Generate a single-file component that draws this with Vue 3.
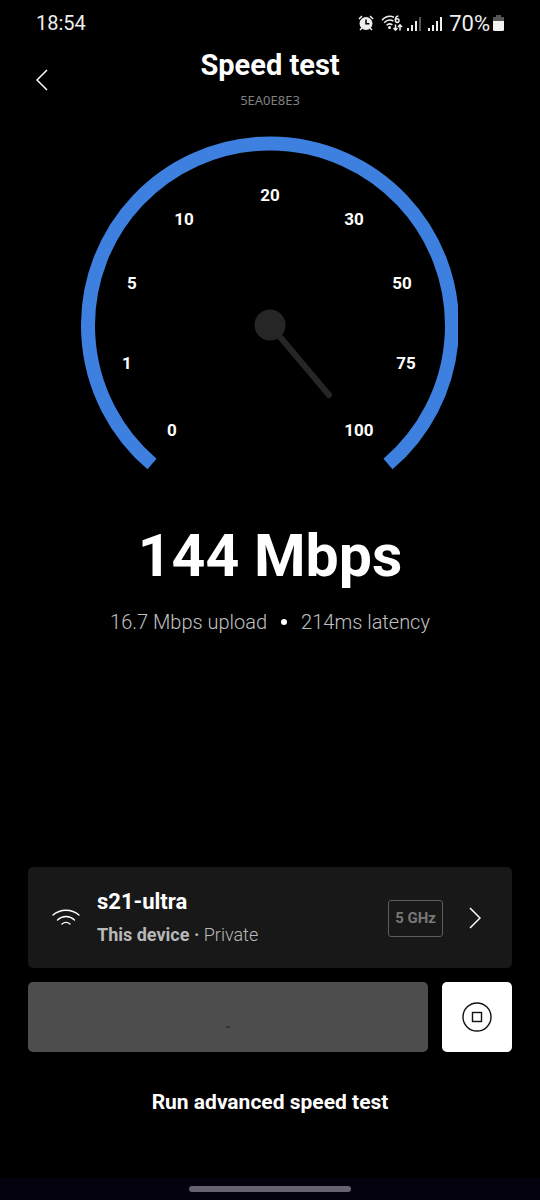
<template>
  <div class="screen">
    <div class="status-bar">
      <span>{{ time }}</span>
      <div class="status-icons">
        <svg width="16" height="16" viewBox="0 0 16 16" aria-hidden="true">
          <path d="M1 4 4 1M15 4 12 1M4 13l-2 2M12 13l2 2" stroke="#eee" stroke-width="1.6" />
          <circle cx="8" cy="8.5" r="6.5" fill="#eee" />
          <path d="M8 4.5v4.3h3.4" fill="none" stroke="#000" stroke-width="1.5" />
        </svg>
        <svg class="wifi-status" width="22" height="17" viewBox="0 0 22 17" aria-hidden="true">
          <g fill="none" stroke="#eee" stroke-width="1.5">
            <path d="M1 5.2C4.5 1.4 9 .6 13 2.2" />
            <path d="M3.2 7.8C5.8 5 9.5 4.6 12.4 6" />
            <path d="M5.6 10.3c1.8-1.7 4-1.7 5.8-.3" />
            <path d="M17.4 1c-2.2.3-3 2-3 4" />
            <circle cx="16.2" cy="5.6" r="1.8" />
            <path d="M14.5 9.5V15M12.5 13l2 2.2 2-2.2M19 15.5V10M17 12l2-2.2 2 2.2" />
          </g>
          <circle cx="8.5" cy="12.5" r="1.5" fill="#eee" />
        </svg>
        <svg
          v-for="(signal, i) in signals"
          :key="i"
          class="signal"
          width="15"
          height="15"
          viewBox="0 0 15 15"
          aria-hidden="true"
        >
          <rect x="0" y="12" width="2" height="3" fill="#eee" />
          <rect x="4" y="9" width="2" height="6" fill="#eee" />
          <rect x="8" y="5" width="2" height="10" fill="#eee" />
          <rect x="12" y="1" width="2" height="14" :fill="signal === 4 ? '#eee' : '#555'" />
        </svg>
        <span class="battery-level">70%</span>
        <svg width="11" height="16" viewBox="0 0 11 16" aria-hidden="true">
          <path d="M3 0h5v2h3v5H0V2h3z" fill="#555" />
          <path d="M0 6h11v8.5q0 1.5-1.5 1.5h-8Q0 16 0 14.5z" fill="#f2f2f2" />
        </svg>
      </div>
    </div>

    <header class="header">
      <button class="back" type="button" aria-label="Back">
        <svg width="12" height="22" viewBox="0 0 12 22" aria-hidden="true">
          <path d="M11 1 1 11l10 10" fill="none" stroke="#fff" stroke-width="1.5" />
        </svg>
      </button>
      <h1>Speed test</h1>
      <p class="network-id">5EA0E8E3</p>
    </header>

    <main class="content">
      <svg class="gauge" viewBox="0 0 378 336" role="img" aria-label="Speed gauge">
        <clipPath id="gauge-clip">
          <rect width="377" height="336" />
        </clipPath>
        <path
          class="gauge-arc"
          d="M71 328A182 182 0 1 1 307 328"
          clip-path="url(#gauge-clip)"
        />
        <text v-for="tick in ticks" :key="tick.label" :x="tick.x" :y="tick.y">
          {{ tick.label }}
        </text>
        <path class="needle" d="M189 189 248 259" />
        <circle class="hub" cx="189" cy="189" r="15.5" />
      </svg>

      <p class="download">144 Mbps</p>
      <p class="details">
        <span>16.7 Mbps upload</span>
        <span class="dot"></span>
        <span>214ms latency</span>
      </p>
    </main>

    <section class="actions">
      <button class="device" type="button">
        <svg width="28" height="18" viewBox="0 0 28 18" aria-hidden="true">
          <g fill="none" stroke="#fff" stroke-width="1.4" stroke-linecap="round">
            <path d="M1 6C8.5-.4 19.5-.4 27 6" />
            <path d="M5.5 11c5-4.6 12-4.6 17 0" />
            <path d="M10 15c2.5-2 5.5-2 8 0" />
          </g>
        </svg>
        <span class="device-info">
          <span class="device-name">s21-ultra</span>
          <span class="device-meta"><b>This device ·</b> Private</span>
        </span>
        <span class="band">5 GHz</span>
        <svg width="12" height="22" viewBox="0 0 12 22" aria-hidden="true">
          <path d="M1 1l10 10L1 21" fill="none" stroke="#fff" stroke-width="1.5" />
        </svg>
      </button>

      <div class="run-row">
        <button class="progress" type="button" aria-label="Test running">
          <span class="progress-dot"></span>
        </button>
        <button class="stop" type="button" aria-label="Stop">
          <svg width="30" height="30" viewBox="0 0 30 30" aria-hidden="true">
            <g fill="none" stroke="#111" stroke-width="1.4">
              <circle cx="15" cy="15" r="14" />
              <rect x="10.5" y="10.5" width="9" height="9" />
            </g>
          </svg>
        </button>
      </div>

      <a class="advanced" href="#">Run advanced speed test</a>
    </section>

    <div class="nav-bar">
      <span class="nav-handle"></span>
    </div>
  </div>
</template>

<script setup>
const time = '18:54'

// bars lit on each SIM
const signals = [3, 4]

const ticks = [
  { label: '0', x: 91, y: 300 },
  { label: '1', x: 46, y: 233 },
  { label: '5', x: 51, y: 153 },
  { label: '10', x: 103, y: 89 },
  { label: '20', x: 189, y: 65 },
  { label: '30', x: 273, y: 89 },
  { label: '50', x: 321, y: 153 },
  { label: '75', x: 325, y: 233 },
  { label: '100', x: 278, y: 300 }
]
</script>

<style>
body {
  margin: 0;
  background: #000;
}
</style>

<style scoped>
.screen {
  display: flex;
  flex-direction: column;
  min-height: 100vh;
  background: #000;
  color: #fff;
  font-family: Roboto, sans-serif;
}

h1,
p {
  margin: 0;
}

button {
  border: 0;
  padding: 0;
  color: inherit;
  font-family: inherit;
  cursor: pointer;
}

svg {
  display: block;
  flex-shrink: 0;
}

.status-bar {
  display: flex;
  align-items: center;
  justify-content: space-between;
  height: 46px;
  padding: 0 36px;
  color: #eee;
  font-size: 20px;
}

.status-icons {
  display: flex;
  align-items: center;
}

.wifi-status {
  margin-left: 7px;
}

.signal {
  margin-left: 4px;
}

.signal + .signal {
  margin-left: 6px;
}

.battery-level {
  margin: 0 3px 0 6px;
  font-size: 22px;
}

.header {
  position: relative;
  padding-bottom: 26px;
  text-align: center;
}

.back {
  position: absolute;
  top: 14px;
  left: 26px;
  padding: 9px 10px;
  background: none;
}

h1 {
  font-size: 29px;
  font-weight: 700;
  line-height: 38px;
}

.network-id {
  padding-top: 6px;
  color: #808080;
  font-family: "Noto Sans", sans-serif;
  font-size: 13px;
  line-height: 20px;
}

.content {
  display: flex;
  flex: 1;
  flex-direction: column;
  align-items: center;
}

.gauge {
  width: 70%;
  overflow: visible;
}

.gauge text {
  fill: #fff;
  font-size: 17px;
  font-weight: 700;
  text-anchor: middle;
}

.gauge-arc {
  fill: none;
  stroke: #3e80df;
  stroke-width: 14;
}

.needle {
  stroke: #262626;
  stroke-width: 6;
  stroke-linecap: round;
}

.hub {
  fill: #262626;
}

.download {
  padding-top: 50px;
  font-size: 59px;
  font-weight: 700;
  line-height: 68px;
}

.details {
  display: flex;
  align-items: center;
  gap: 14px;
  padding-top: 20px;
  color: #c0c0c0;
  font-size: 20px;
  font-weight: 300;
  line-height: 24px;
}

.dot {
  width: 6px;
  height: 6px;
  border-radius: 50%;
  background: #fff;
}

.actions {
  display: flex;
  flex-direction: column;
  gap: 14px;
  padding: 0 28px 60px;
}

.device {
  display: flex;
  align-items: center;
  padding: 18px 31px 17px 24px;
  border-radius: 5px;
  background: #181818;
  text-align: left;
}

.device-info {
  display: flex;
  flex: 1;
  flex-direction: column;
  padding-left: 17px;
}

.device-name {
  font-size: 22px;
  font-weight: 700;
  line-height: 34px;
}

.device-meta {
  color: #b8b8b8;
  font-size: 18px;
  font-weight: 300;
  line-height: 32px;
}

.device-meta b {
  font-weight: 700;
}

.band {
  margin-right: 26px;
  padding: 0 6px;
  border: 1px solid #5c5c5c;
  border-radius: 3px;
  color: #777;
  font-size: 15px;
  font-weight: 700;
  line-height: 35px;
}

.run-row {
  display: flex;
  gap: 14px;
}

.progress,
.stop {
  display: flex;
  align-items: center;
  justify-content: center;
  height: 70px;
  border-radius: 5px;
}

.progress {
  flex: 1;
  background: #4d4d4d;
}

.progress-dot {
  width: 4px;
  height: 2px;
  margin-top: 20px;
  background: #333;
}

.stop {
  width: 70px;
  background: #fff;
}

.advanced {
  align-self: center;
  padding-top: 20px;
  color: #fff;
  font-size: 21px;
  font-weight: 700;
  line-height: 32px;
  text-decoration: none;
}

.nav-bar {
  display: flex;
  align-items: center;
  justify-content: center;
  height: 22px;
  background: #04020e;
}

.nav-handle {
  width: 30%;
  height: 6px;
  border-radius: 3px;
  background: #67636f;
}
</style>
